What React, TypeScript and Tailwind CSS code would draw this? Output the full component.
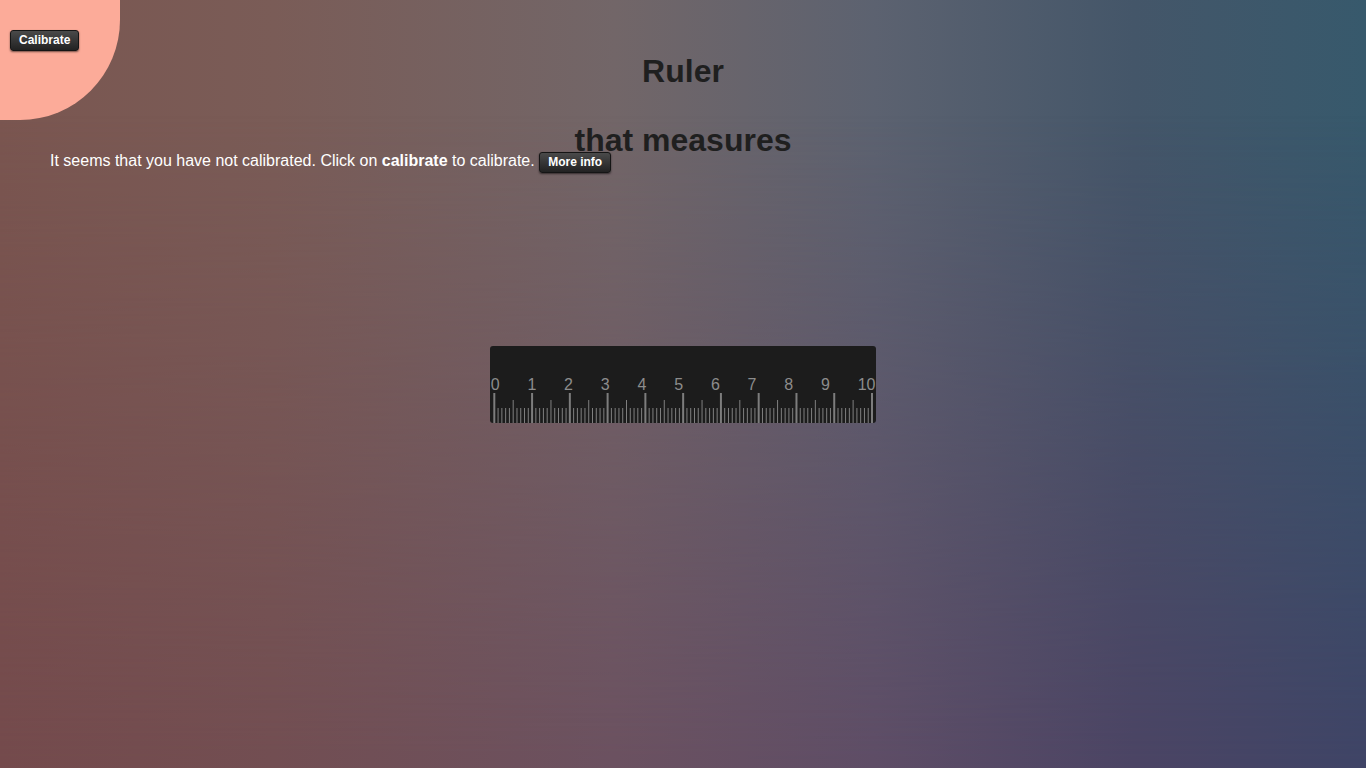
import React from "react";

const CM = 37.77;
const MM = CM / 10;

function Button(props: { children: React.ReactNode }) {
  return (
    <button className="inline-block cursor-pointer rounded-[3px] border border-[#151515] bg-[linear-gradient(#4a4a4a,#222222)] px-2 py-[2px] text-[12px] font-bold leading-[15px] text-white shadow-[0_1px_2px_rgba(0,0,0,0.55)]">
      {props.children}
    </button>
  );
}

function Ruler() {
  const ticks = Array.from({ length: 101 }, (_, i) => i);
  const labels = Array.from({ length: 11 }, (_, i) => i);

  return (
    <div className="mx-auto h-[77px] w-[386px] overflow-hidden rounded-[3px] bg-[#1c1c1c]">
      <svg width="386" height="77" viewBox="0 0 386 77">
        {labels.map((n) => (
          <text
            key={n}
            x={0.7 + n * 36.7}
            y={44}
            fontSize={16}
            fill="#8c8c8c"
            fontFamily="'Liberation Sans', Arial, sans-serif"
          >
            {n}
          </text>
        ))}
        {ticks.map((i) => {
          const x = 4.3 + i * MM;
          const major = i % 10 === 0;
          const half = i % 5 === 0;
          return (
            <rect
              key={i}
              x={major ? x - 1 : x - 0.5}
              y={major ? 47 : half ? 54 : 62}
              width={major ? 2 : 1}
              height={major ? 30 : half ? 23 : 15}
              fill={major ? "#7d7d7d" : "#7f7f7f"}
            />
          );
        })}
      </svg>
    </div>
  );
}

export default function App() {
  return (
    <div className="relative h-screen w-full overflow-hidden bg-[linear-gradient(to_right,#7a5650_0%,#7a5c57_20%,#726668_45%,#5c6270_64%,#445669_83%,#37596c_100%)] font-['Liberation_Sans',Arial,sans-serif]">
      <div className="absolute inset-0 bg-[linear-gradient(to_right,#744a4c_0%,#724e52_20%,#6b5160_45%,#5e4d66_64%,#4b4464_83%,#3f4466_100%)] [mask-image:linear-gradient(to_bottom,transparent_15%,black_100%)]" />

      <div className="absolute left-0 top-0 flex h-[120px] w-[120px] items-start rounded-br-[100px] bg-[#fcab99] pl-[10px] pt-[30px]">
        <Button>Calibrate</Button>
      </div>

      <div className="relative pt-[53px]">
        <h1 className="text-center text-[32px] font-bold leading-[37px] text-[#1f1f1f]">
          Ruler
        </h1>
        <h1 className="mt-[32px] text-center text-[32px] font-bold leading-[37px] text-[#1f1f1f]">
          that measures
        </h1>
        <p className="-mt-[9px] h-[22px] pl-[50px] text-[16px] leading-[22px] text-white">
          It seems that you have not calibrated. Click on <b>calibrate</b> to
          calibrate. <Button>More info</Button>
        </p>
        <div className="mt-[174px]">
          <Ruler />
        </div>
      </div>
    </div>
  );
}
